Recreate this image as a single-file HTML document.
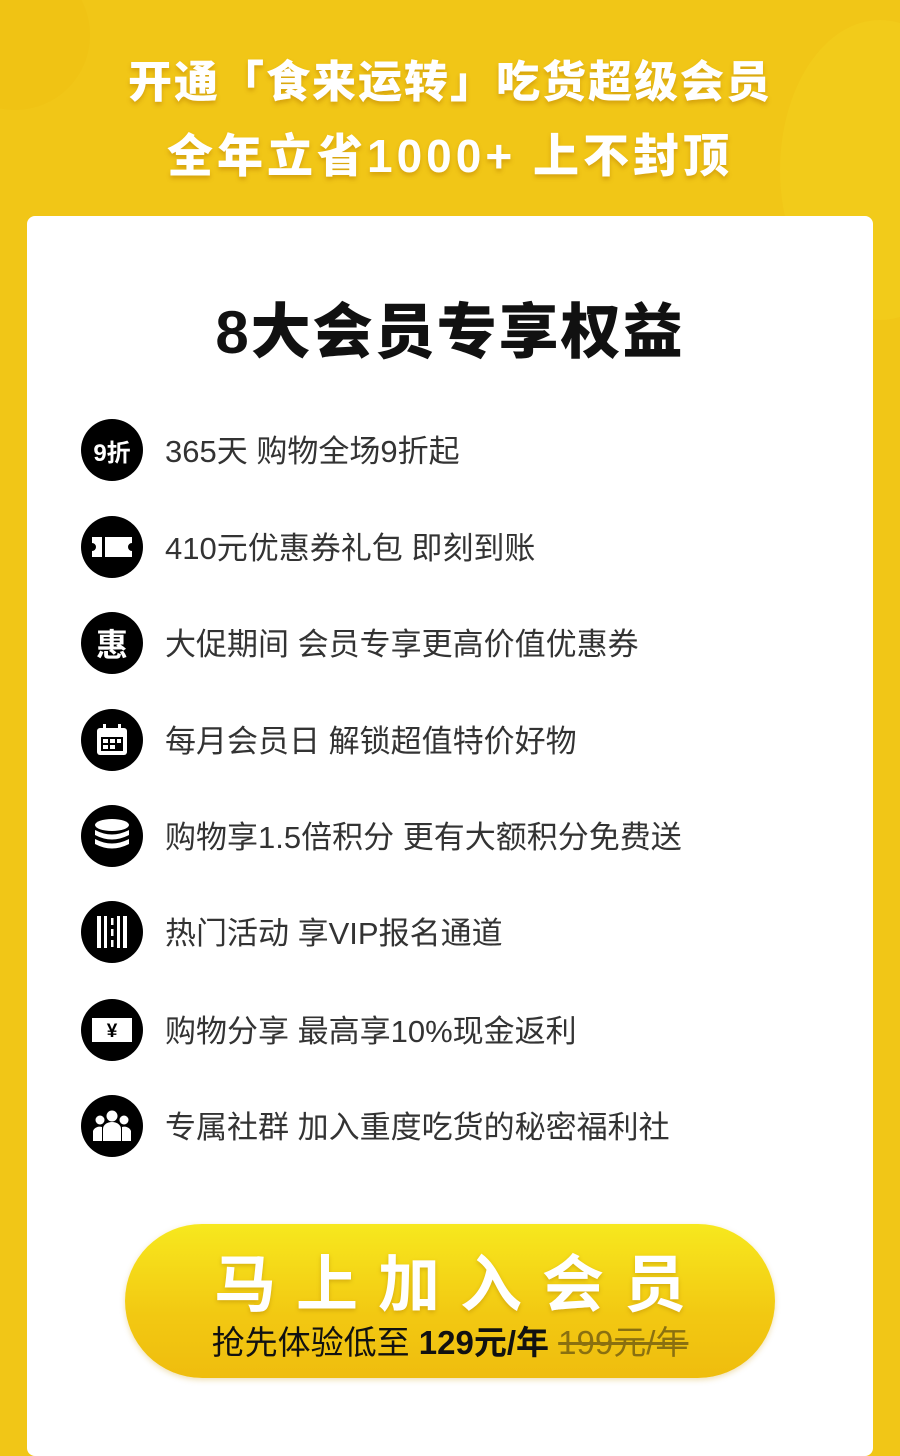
<!DOCTYPE html>
<html><head><meta charset="utf-8"><style>
body{margin:0;width:900px;height:1435px;overflow:hidden;background:#f1c617;font-family:"Liberation Sans","Noto Sans CJK SC",sans-serif;position:relative}
.bg1{position:absolute;left:-60px;top:-40px;width:150px;height:150px;border-radius:50%;background:#efc012;opacity:.5}
.bg2{position:absolute;right:-80px;top:20px;width:200px;height:300px;border-radius:50%;background:#f3d41f;opacity:.35}
.h{position:absolute;left:0;width:900px;text-align:center;color:#fff;font-weight:900;font-size:44px;text-shadow:0 3px 4px rgba(180,120,0,.45);white-space:nowrap}
.card{position:absolute;left:27px;top:216px;width:846px;height:1240px;background:#fff;border-radius:8px}
.title{position:absolute;left:0;top:284px;width:900px;text-align:center;font-size:60px;font-weight:900;color:#111;letter-spacing:2px}
.row{position:absolute;left:81px;height:62px;display:flex;align-items:center}
.ic{width:62px;height:62px;border-radius:50%;background:#000;display:flex;align-items:center;justify-content:center;color:#fff;font-weight:bold;flex:none}
.row span{margin-left:22px;font-size:31px;color:#333;white-space:nowrap;margin-top:-4px}
.btn{position:absolute;left:125px;top:1224px;width:650px;height:154px;border-radius:77px;background:linear-gradient(180deg,#f7e81e 0%,#f2c812 60%,#efbd0e 100%);box-shadow:0 2px 6px rgba(200,150,0,.3)}
.b1{position:absolute;left:0;top:10px;width:650px;text-align:center;color:#fff;font-size:62px;font-weight:bold;letter-spacing:20px;text-indent:20px;text-shadow:0 2px 4px rgba(170,120,0,.4)}
.b2{position:absolute;left:0;top:92px;width:650px;text-align:center;font-size:33px;color:#111;white-space:nowrap}
</style></head><body>
<div class="bg1"></div><div class="bg2"></div>
<div class="h" style="top:46px;letter-spacing:2px">开通「食来运转」吃货超级会员</div>
<div class="h" style="top:120px;font-size:46px;letter-spacing:4px">全年立省1000+ 上不封顶</div>
<div class="card"></div>
<div class="title">8大会员专享权益</div>

<div class="row" style="top:419px"><div class="ic" style="font-size:24px">9折</div><span>365天 购物全场9折起</span></div>
<div class="row" style="top:516px"><div class="ic"><svg width="44" height="24" viewBox="0 0 44 24"><path d="M2 2h40v6a4 4 0 0 0 0 8v6H2v-6a4 4 0 0 0 0-8z" fill="#fff"/><rect x="12" y="2" width="3" height="20" fill="#000"/></svg></div><span>410元优惠券礼包 即刻到账</span></div>
<div class="row" style="top:612px"><div class="ic" style="font-size:32px">惠</div><span>大促期间 会员专享更高价值优惠券</span></div>
<div class="row" style="top:709px"><div class="ic"><svg width="36" height="36" viewBox="0 0 36 36"><rect x="3" y="6" width="30" height="27" rx="3" fill="#fff"/><rect x="9" y="2" width="3" height="8" fill="#fff"/><rect x="24" y="2" width="3" height="8" fill="#fff"/><rect x="7" y="15" width="22" height="14" fill="#000"/><g fill="#fff"><rect x="9" y="17" width="5" height="4"/><rect x="16" y="17" width="5" height="4"/><rect x="23" y="17" width="4" height="4"/><rect x="9" y="23" width="5" height="4"/><rect x="16" y="23" width="5" height="4"/></g></svg></div><span>每月会员日 解锁超值特价好物</span></div>
<div class="row" style="top:805px"><div class="ic"><svg width="38" height="36" viewBox="0 0 38 36"><g fill="#fff"><ellipse cx="19" cy="7" rx="17" ry="6"/><path d="M2 12q17 9 34 0v5q-17 9-34 0z"/><path d="M2 21q17 9 34 0v5q-17 9-34 0z"/></g></svg></div><span>购物享1.5倍积分 更有大额积分免费送</span></div>
<div class="row" style="top:901px"><div class="ic"><svg width="34" height="36" viewBox="0 0 34 36"><g fill="#fff"><rect x="2" y="2" width="4" height="32"/><rect x="28" y="2" width="4" height="32"/><rect x="9" y="2" width="3" height="32"/><rect x="22" y="2" width="3" height="32"/><rect x="16" y="4" width="2.5" height="7"/><rect x="16" y="15" width="2.5" height="7"/><rect x="16" y="26" width="2.5" height="7"/></g></svg></div><span>热门活动 享VIP报名通道</span></div>
<div class="row" style="top:999px"><div class="ic"><svg width="42" height="26" viewBox="0 0 42 26"><rect x="1" y="1" width="40" height="24" fill="#fff"/><text x="21" y="20" font-size="19" font-weight="bold" text-anchor="middle" fill="#000" font-family="Liberation Sans">¥</text></svg></div><span>购物分享 最高享10%现金返利</span></div>
<div class="row" style="top:1095px"><div class="ic"><svg width="40" height="34" viewBox="0 0 40 34"><g fill="#fff"><circle cx="20" cy="7" r="5.5"/><circle cx="8" cy="11" r="4.5"/><circle cx="32" cy="11" r="4.5"/><path d="M11 32V20a9 7 0 0 1 18 0v12z"/><path d="M1 32V22a7 6 0 0 1 9-4v14z"/><path d="M39 32V22a7 6 0 0 0-9-4v14z"/></g></svg></div><span>专属社群 加入重度吃货的秘密福利社</span></div>

<div class="btn"><div class="b1">马上加入会员</div><div class="b2">抢先体验低至 <b>129元/年</b> <s style="color:#8a7010">199元/年</s></div></div>
</body></html>
